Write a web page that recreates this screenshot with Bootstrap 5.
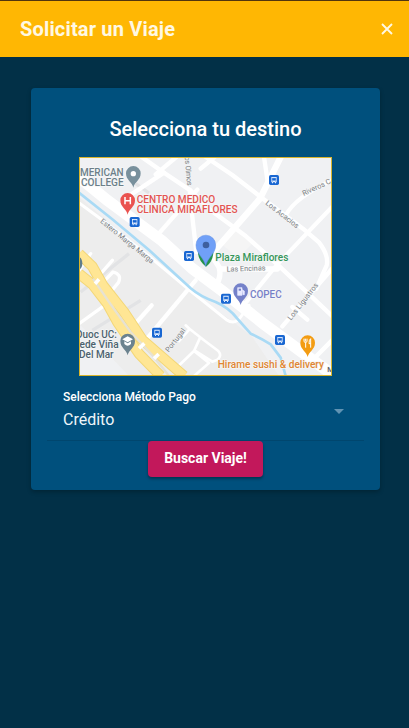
<!DOCTYPE html>
<html lang="es">
<head>
<meta charset="utf-8">
<meta name="viewport" content="width=device-width, initial-scale=1">
<title>Solicitar un Viaje</title>
<link href="https://cdn.jsdelivr.net/npm/bootstrap@5.3.0/dist/css/bootstrap.min.css" rel="stylesheet">
<style>
body{background:#023047;color:#fff;font-family:Roboto,sans-serif;min-height:100vh}
.topbar{height:57px;background:#ffb703;border-top:1px solid #52350d;padding:0 15px 0 20px}
.topbar h1{font-size:20px;line-height:24px;color:#fff8e3;letter-spacing:.17px}
.close-x{width:14px;height:14px}
.trip{margin:31px 29px 0 31px;height:402px;background:#00507d;border-radius:4px;box-shadow:0 2px 4px rgba(0,0,0,.25);padding-top:29px}
.trip h2{font-size:20px;line-height:24px;font-weight:500}
.citymap{width:253px;height:219px;margin-top:16px;border:1px solid #d9b52c}
.pay{width:317px;height:65px;border-bottom:1px solid #00466e;padding:14px 20px 0 16px}
.pay-label{font-size:12px;line-height:14px;font-weight:500;letter-spacing:-.03px}
.pay-value{font-size:16px;line-height:20px;margin-top:6px;color:#eef6fa}
.caret{width:10px;height:5px;margin-top:19px}
.go{width:115px;height:36px;background:#c2185b!important;font-size:14px;line-height:34px;padding:0 0 2px!important;border-radius:4px;box-shadow:0 2px 3px rgba(0,0,0,.35)}
</style>
</head>
<body>
<header class="topbar d-flex align-items-center justify-content-between">
  <h1 class="fw-bold mb-0">Solicitar un Viaje</h1>
  <button type="button" class="btn p-0 border-0 d-flex" aria-label="Cerrar">
    <svg class="close-x" viewBox="0 0 14 14" fill="none" stroke="#fff8e3" stroke-width="1.9"><path d="M2 2l10 10M12 2L2 12"/></svg>
  </button>
</header>
<main class="trip d-flex flex-column align-items-center">
  <h2 class="mb-0">Selecciona tu destino</h2>
  <svg class="citymap flex-shrink-0" viewBox="3 3 753 651" font-family="Roboto, sans-serif">
    <defs>
      <g id="bus"><rect x="-15" y="-15" width="30" height="30" rx="5" fill="#1967d2"/><path d="M-8-9H8V7H6v3H3V7H-3v3H-6V7H-8Z" fill="#e3eefe"/><path d="M-5-5H5V1H-5ZM-5 4h2M3 4h2" fill="#1967d2" stroke="#1967d2" stroke-width="1.5"/></g>
      <path id="pin" d="M0 40C-3 23-22 18-22-3A22 22 0 0 1 22-3C22 18 3 23 0 40Z"/>
    </defs>
    <rect width="759" height="657" fill="#f0f1f3"/>
    <path d="M0 120L190 280 330 400 470 500 520 540 600 657H0Z" fill="#ededed"/>
    <path d="M0 500L150 657H0Z" fill="#f0f1f3"/>
    <path d="M425 260l50-45 45 45-42 42Z" fill="#f5f5f5"/>
    <path d="M170 80l40 28M5 405L150 290M40 520l145-90" fill="none" stroke="#e2e3e5" stroke-width="10"/>
    <g fill="none" stroke="#fff" stroke-width="13" stroke-linecap="round" stroke-linejoin="round">
      <path d="M188 0L255 47 334 100 395 160 500 237 595 322 759 477"/>
      <path d="M255 47L130 130M292 0L230 52M355 98L232 238"/>
      <path d="M332 98L340 180 352 285"/>
      <path d="M380 0L460 54 548 122 672 215 720 256Q750 295 743 325L712 395"/>
      <path d="M407 0L365 35M555 0L567 80"/>
      <path d="M759 70Q650 120 620 175M759 150L595 322 490 450" stroke-width="12"/>
      <path d="M425 336H595M405 390Q430 365 420 330L398 295" stroke-width="16"/>
      <path d="M759 335L610 508M640 450L685 488M759 550L700 610"/>
      <path d="M0 138L85 200 215 302 335 402 442 488Q468 505 485 480L510 445" stroke-width="9"/>
      <path d="M350 370L187 565M218 445L160 510"/>
      <path d="M320 505L332 516 378 552M332 516L300 552M362 545L345 582 285 640M378 552L418 582Q430 596 415 608L400 614 350 582M345 582L390 618 345 657" stroke-width="8"/>
      <path d="M35 290L0 340M100 310L48 370M75 373L102 345Q130 352 118 377L72 433M0 500L105 425" stroke-width="10"/>
      <path d="M605 0L543 125 460 220 390 300" stroke-width="19"/>
    </g>
    <path d="M0 60L85 130 250 252 340 335 430 402 553 500 759 652" fill="none" stroke="#fff" stroke-width="34"/>
    <path d="M0 107L100 187 210 279 335 394Q365 420 410 435 450 452 475 485L515 530Q545 543 575 562L605 602 620 657" fill="none" stroke="#a9daf5" stroke-width="8"/>
    <g fill="none" stroke-linejoin="round">
      <path d="M0 350L40 382 85 440 115 495 180 590 245 657M0 290L40 328 72 385 135 465 190 548 315 657" stroke="#f3d778" stroke-width="32"/>
      <path d="M0 350L40 382 85 440 115 495 180 590 245 657M0 290L40 328 72 385 135 465 190 548 315 657" stroke="#ffe694" stroke-width="26"/>
      <path d="M42 365L90 435 155 525 225 600 270 657" stroke="#e7e2d2" stroke-width="7"/>
      <path d="M48 380l12-13M180 574l16-15M225 605l14-14" stroke="#fff" stroke-width="11"/>
    </g>
    <use href="#bus" x="167" y="195"/><use href="#bus" x="585" y="69"/><use href="#bus" x="330" y="297"/><use href="#bus" x="441" y="425"/><use href="#bus" x="234" y="527"/><use href="#bus" x="603" y="549"/>
    <path d="M0 301a10 18 0 0 1 0 36Z" fill="#607d8b"/>
    <use href="#pin" x="163" y="52" fill="#78909c"/><circle cx="163" cy="50" r="8" fill="#fff"/>
    <use href="#pin" x="146" y="133" fill="#ea5350"/><path d="M138 120v22M154 120v22M138 131h16" stroke="#fff" stroke-width="4.5"/>
    <use href="#pin" x="146" y="555" fill="#6b828e"/><path d="M130 547l16-9 16 9-16 9ZM136 553v8q10 10 20 0v-8l-10 6Z" fill="#fff"/>
    <use href="#pin" x="485" y="404" fill="#7481c9"/><path d="M476 392h13v23h-13ZM489 398l7 4v11h-5" fill="#e8eaff" stroke="#e8eaff" stroke-width="2"/><path d="M479 395h7v6h-7Z" fill="#7481c9"/>
    <use href="#pin" x="686" y="560" fill="#f39c12"/><path d="M679 545v9M684 545v9M675 545v9q4 6 9 0M680 556v16M695 572v-27q-5 2-5 15h5" fill="none" stroke="#fff" stroke-width="3"/>
    <path d="M357 285Q357 310 381 329 402 315 403 285Z" fill="#24924a"/>
    <path d="M380 328C376 302 351 291 351 264A29.500 29.500 0 0 1 410 264C410 291 384 302 380 328Z" fill="#70a0f7" stroke="#5c8de5" stroke-width="1.500"/><circle cx="381" cy="264" r="10" fill="#3e5f9e"/>
    <g stroke="#f6f7f8" stroke-width="4" stroke-linejoin="round" paint-order="stroke" font-size="30" font-weight="500">
      <g fill="#6b7f89"><text x="3" y="57" textLength="131" lengthAdjust="spacingAndGlyphs">MERICAN</text><text x="6" y="87" textLength="128" lengthAdjust="spacingAndGlyphs">COLLEGE</text></g>
      <g fill="#e35451"><text x="173" y="137" textLength="236" lengthAdjust="spacingAndGlyphs">CENTRO MEDICO</text><text x="173" y="168" textLength="303" lengthAdjust="spacingAndGlyphs">CLINICA MIRAFLORES</text></g>
      <text x="409" y="311" fill="#35965a" textLength="219" lengthAdjust="spacingAndGlyphs">Plaza Miraflores</text>
      <text x="513" y="424" fill="#7780c7" textLength="95" lengthAdjust="spacingAndGlyphs">COPEC</text>
      <g fill="#4c626e"><text x="-9" y="543" textLength="123" lengthAdjust="spacingAndGlyphs">Duoc UC:</text><text x="-17" y="574" textLength="136" lengthAdjust="spacingAndGlyphs">Sede Viña</text><text x="0" y="604" textLength="104" lengthAdjust="spacingAndGlyphs">Del Mar</text></g>
      <text x="416" y="632" fill="#e08632" textLength="319" lengthAdjust="spacingAndGlyphs">Hirame sushi &amp; delivery</text>
      <text x="745" y="645" fill="#5f6368" font-size="22">M</text>
    </g>
    <g fill="#7b7f83" font-size="22" stroke="#f3f4f5" stroke-width="3" paint-order="stroke">
      <text transform="translate(62 195) rotate(39)" textLength="200">Estero Marga Marga</text>
      <text transform="translate(558 141) rotate(38)" textLength="120">Los Acacios</text>
      <text transform="translate(674 117) rotate(-25)" textLength="92">Riveros C</text>
      <text transform="translate(443 344) rotate(-2)" textLength="117">Las Encinas</text>
      <text transform="translate(636 491) rotate(-52)" textLength="135">Los Ligustros</text>
      <text transform="translate(269 587) rotate(-52)" textLength="84">Portugal</text>
      <text transform="translate(316 -12) rotate(85)" textLength="99">Los Olmos</text>
    </g>
  </svg>
  <div class="pay d-flex justify-content-between">
    <div>
      <div class="pay-label">Selecciona Método Pago</div>
      <div class="pay-value">Crédito</div>
    </div>
    <svg class="caret" viewBox="0 0 10 5"><path d="M0 0h10L5 5Z" fill="#6093b3"/></svg>
  </div>
  <button type="button" class="btn go border-0 text-white fw-bold">Buscar Viaje!</button>
</main>
<script src="https://cdn.jsdelivr.net/npm/bootstrap@5.3.0/dist/js/bootstrap.bundle.min.js"></script>
</body>
</html>
